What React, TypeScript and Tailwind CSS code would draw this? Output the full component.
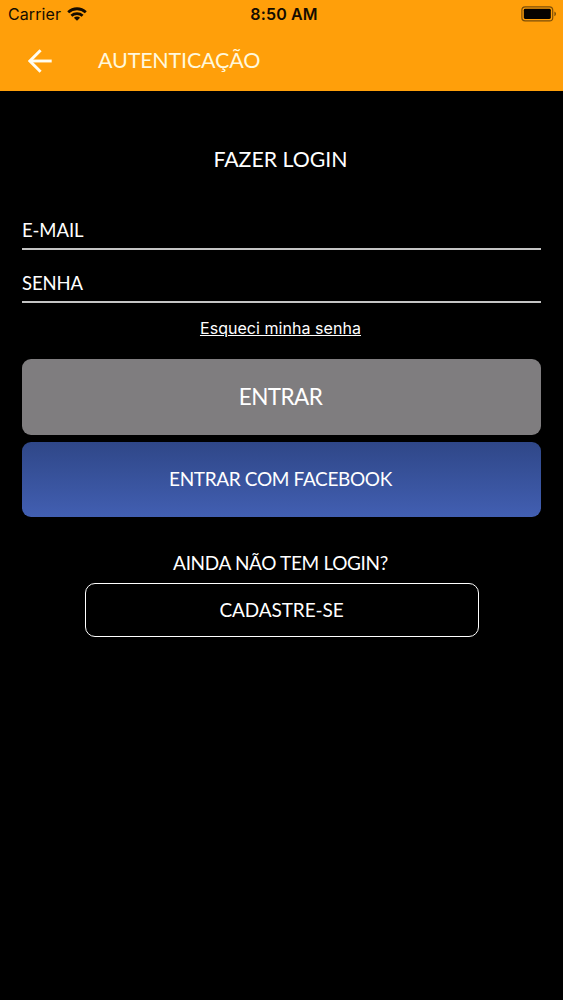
import React from 'react';

function WifiIcon() {
  return (
    <svg width="20" height="14" viewBox="0 0 20 14" fill="none" stroke="#140c00" strokeWidth="2.8">
      <path d="M1.2 5.2C6.2.6 13.8.6 18.8 5.2" />
      <path d="M4.4 8.7c3.1-2.8 8.1-2.8 11.2 0" />
      <path d="M10 13.7 6.9 10.7c1.7-1.5 4.5-1.5 6.2 0z" fill="#140c00" stroke="none" />
    </svg>
  );
}

function BatteryIcon() {
  return (
    <svg width="36" height="16" viewBox="0 0 36 16" fill="none">
      <rect x="0.9" y="0.9" width="30.8" height="14" rx="3.2" stroke="#7d4f08" strokeWidth="1.2" />
      <rect x="2.8" y="2.8" width="27" height="10.2" rx="1.4" fill="#050200" />
      <path d="M33.4 5.6c2.1.8 2.1 3.8 0 4.6z" fill="#7d4f08" />
    </svg>
  );
}

function BackArrow() {
  return (
    <svg width="24" height="24" viewBox="0 0 24 24" fill="none" stroke="#fffdf0" strokeWidth="2.9">
      <path d="M23.7 12H2" />
      <path d="M12.6 1.2 1.9 12l10.7 10.8" />
    </svg>
  );
}

function StatusBar() {
  return (
    <div className="flex h-7 items-center justify-between pr-1.5 pl-2 font-['Inter',sans-serif] text-[16px] leading-5 text-[#140c00]">
      <div className="flex flex-1 items-center gap-[6px]">
        <span className="tracking-[0.005em]">Carrier</span>
        <WifiIcon />
      </div>
      <span className="pl-[3px] font-semibold tracking-[0.01em]">8:50 AM</span>
      <div className="flex flex-1 justify-end">
        <BatteryIcon />
      </div>
    </div>
  );
}

function Field({ label, type }: { label: string; type: string }) {
  return (
    <input
      type={type}
      placeholder={label}
      className="block h-[42px] w-full border-b-2 border-[#c4c4c4] bg-transparent pt-[3px] text-[18.5px] tracking-[-0.005em] text-white outline-none placeholder:text-white placeholder:opacity-100"
    />
  );
}

export default function App() {
  return (
    <div className="min-h-[1000px] bg-black font-['Lato',sans-serif] text-white">
      <header className="h-[91px] bg-[#ff9f0a]">
        <StatusBar />
        <div className="flex h-[66px] items-center pl-7">
          <button type="button" aria-label="Voltar">
            <BackArrow />
          </button>
          <h1 className="ml-[46px] pb-[2px] text-[21.5px] leading-7 tracking-[-0.009em] text-[#fff8dc]">AUTENTICAÇÃO</h1>
        </div>
      </header>

      <main className="flex flex-col px-[22px] pt-[54px]">
        <h2 className="pr-[2px] text-center text-[21.3px] leading-7">FAZER LOGIN</h2>
        <form className="mt-[35px] flex flex-col">
          <Field label="E-MAIL" type="email" />
          <div className="h-[11px]" />
          <Field label="SENHA" type="password" />
          <a
            href="#"
            className="mt-[15px] mr-[2px] self-center font-['Inter',sans-serif] text-[16px] leading-5 tracking-[0.003em] underline"
          >
            Esqueci minha senha
          </a>
          <button
            type="button"
            className="mt-[21px] h-[76px] rounded-[9px] bg-[#7f7d7f] pr-[2px] text-[22.5px] tracking-[-0.025em]"
          >
            ENTRAR
          </button>
          <button
            type="button"
            className="mt-[7px] h-[75px] rounded-[9px] bg-linear-to-b from-[#2f4788] to-[#425fb2] pr-[2px] text-[19px] tracking-[-0.018em]"
          >
            ENTRAR COM FACEBOOK
          </button>
        </form>
        <p className="mt-[34px] pr-[2px] text-center text-[19px] leading-6 tracking-[-0.018em]">AINDA NÃO TEM LOGIN?</p>
        <button
          type="button"
          className="mt-2 h-[54px] w-[394px] self-center rounded-[10px] border-[1.5px] border-white text-[19px] tracking-[-0.005em]"
        >
          CADASTRE-SE
        </button>
      </main>
    </div>
  );
}
